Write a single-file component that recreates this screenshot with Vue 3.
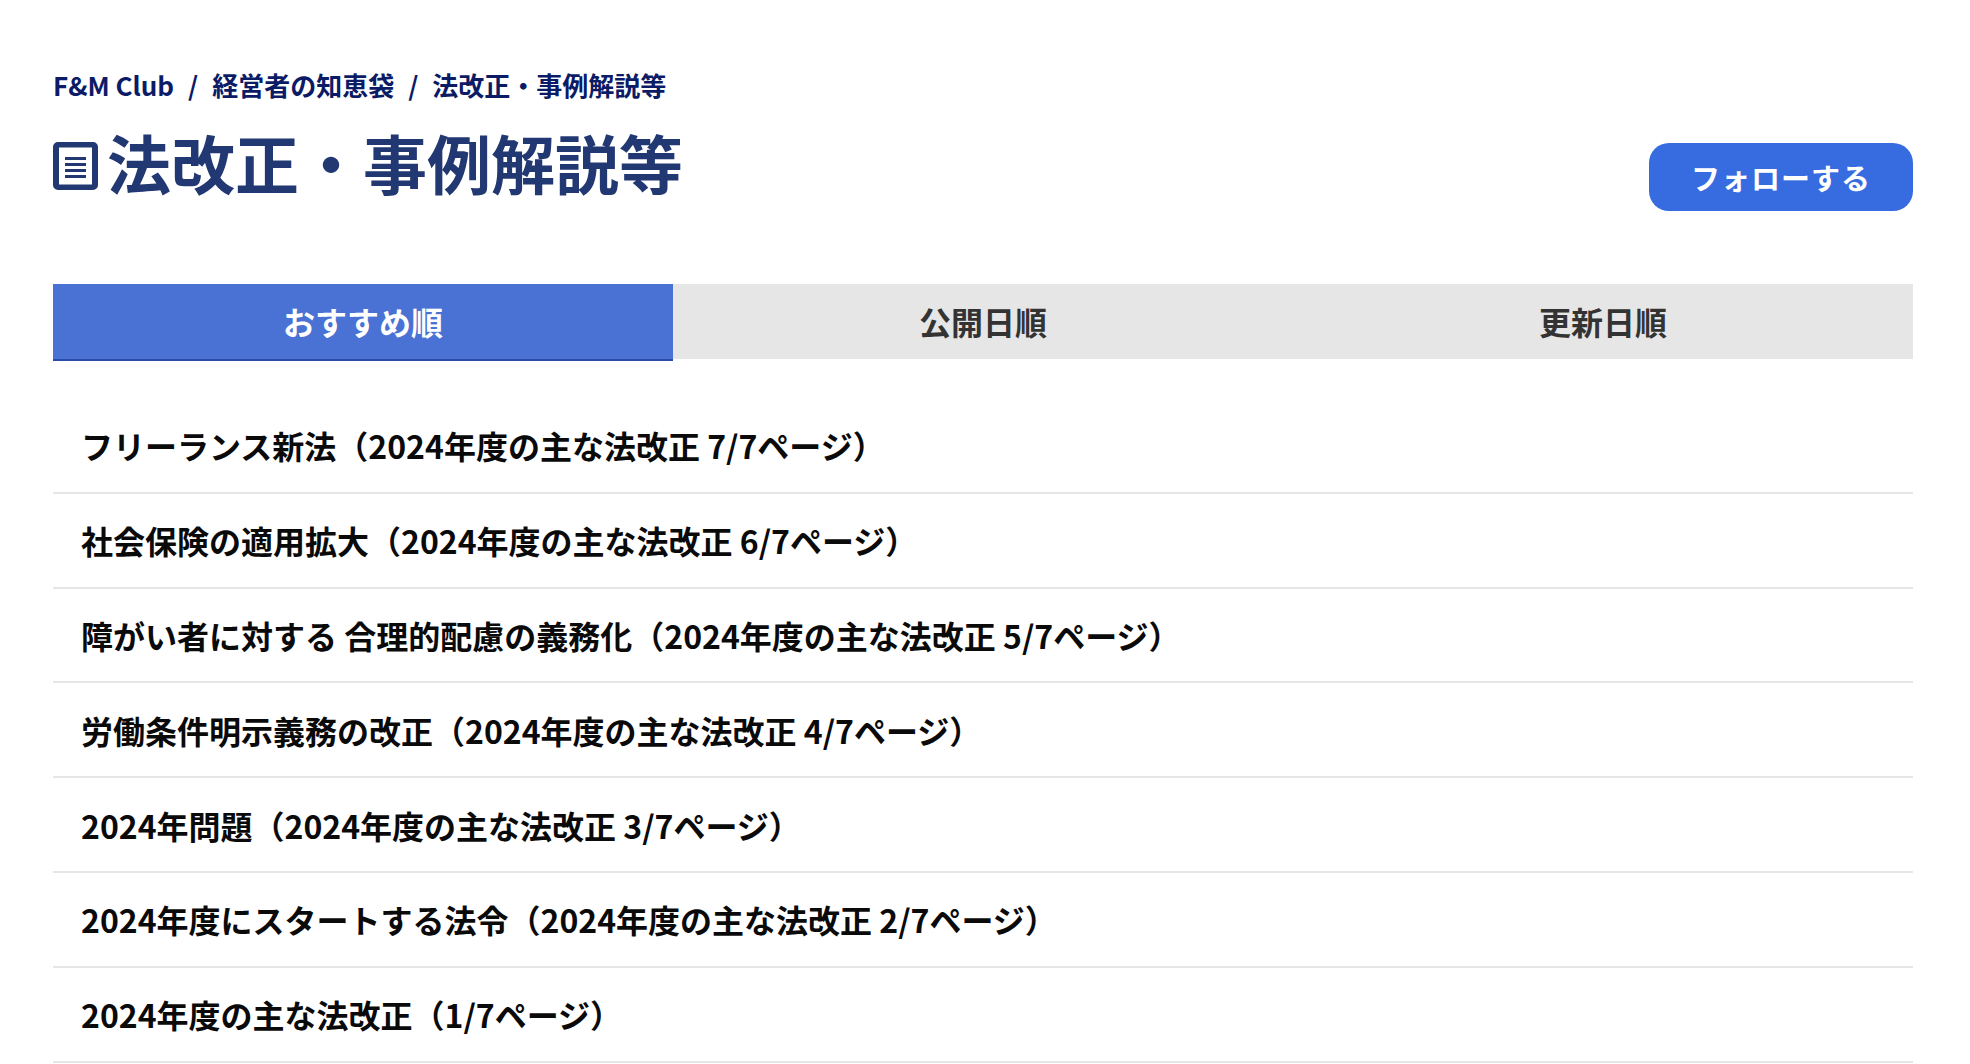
<script setup>
const tabs = [
  { label: 'おすすめ順', active: true },
  { label: '公開日順', active: false },
  { label: '更新日順', active: false },
]
const items = [
  'フリーランス新法（2024年度の主な法改正 7/7ページ）',
  '社会保険の適用拡大（2024年度の主な法改正 6/7ページ）',
  '障がい者に対する 合理的配慮の義務化（2024年度の主な法改正 5/7ページ）',
  '労働条件明示義務の改正（2024年度の主な法改正 4/7ページ）',
  '2024年問題（2024年度の主な法改正 3/7ページ）',
  '2024年度にスタートする法令（2024年度の主な法改正 2/7ページ）',
  '2024年度の主な法改正（1/7ページ）',
]
</script>

<template>
  <div class="page">
    <nav class="crumbs">
      <span>F&amp;M Club</span><span class="sep">/</span><span>経営者の知恵袋</span><span class="sep">/</span><span>法改正・事例解説等</span>
    </nav>
    <header class="head">
      <h1 class="title">
        <svg class="icon" viewBox="0 0 45 48" width="45" height="48" aria-hidden="true">
          <path fill="currentColor" fill-rule="evenodd" d="M5 0h35a5 5 0 0 1 5 5v38a5 5 0 0 1-5 5H5a5 5 0 0 1-5-5V5a5 5 0 0 1 5-5zM6 5.500v37h33v-37z" />
          <path fill="currentColor" d="M12 15h21v3H12zM12 21h21v3H12zM12 27h21v3H12zM12 33h21v3H12z" />
        </svg>
        <span>法改正・事例解説等</span>
      </h1>
      <button class="follow" type="button">フォローする</button>
    </header>
    <div class="tabs">
      <div v-for="t in tabs" :key="t.label" class="tab" :class="{ active: t.active }">{{ t.label }}</div>
    </div>
    <ul class="list">
      <li v-for="item in items" :key="item" class="row">{{ item }}</li>
    </ul>
  </div>
</template>

<style>
html, body { margin: 0; background: #fff; }
</style>

<style scoped>
.page {
  box-sizing: border-box;
  width: 1970px;
  height: 1064px;
  overflow: hidden;
  padding: 63px 57px 0 53px;
  font-family: "Noto Sans CJK JP", "Noto Sans", sans-serif;
  font-weight: 700;
}
.crumbs {
  display: flex;
  align-items: center;
  gap: 14px;
  font-size: 26px;
  line-height: 44px;
  color: #0b1b66;
}
.head {
  display: flex;
  justify-content: space-between;
  align-items: flex-start;
  margin-top: 7px;
  height: 170px;
}
.title {
  display: flex;
  align-items: center;
  gap: 9px;
  margin: 0;
  padding-top: 1px;
  font-size: 64px;
  line-height: 92px;
  font-weight: 700;
  color: #223872;
}
.icon { flex: none; margin-top: 10px; }
.follow {
  margin-top: 29px;
  width: 264px;
  height: 68px;
  border: 0;
  border-radius: 20px;
  background: #366ce0;
  color: #fff;
  font: inherit;
  font-size: 29px;
  letter-spacing: 1px;
}
.tabs {
  display: grid;
  grid-template-columns: repeat(3, 1fr);
  align-items: start;
}
.tab {
  box-sizing: border-box;
  height: 75px;
  padding-bottom: 2px;
  display: flex;
  align-items: center;
  justify-content: center;
  background: #e6e6e6;
  color: #333;
  font-size: 32px;
}
.tab.active {
  height: 77px;
  padding-bottom: 2px;
  background: #4a72d4;
  border-bottom: 2px solid #2a4ca8;
  color: #fff;
}
.list {
  list-style: none;
  margin: 38px 0 0;
  padding: 0;
}
.row {
  box-sizing: border-box;
  height: 94.8px;
  padding: 0 28px;
  display: flex;
  align-items: center;
  border-bottom: 2px solid #e6e6e6;
  font-size: 32px;
  color: #0a0a0a;
}
</style>
